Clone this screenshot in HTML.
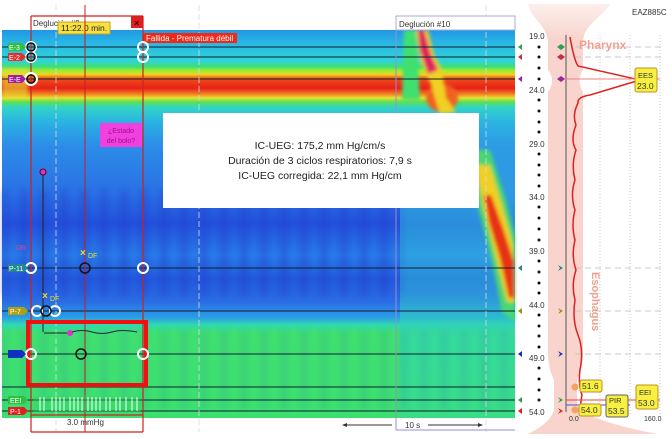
<!DOCTYPE html>
<html><head><meta charset="utf-8"><style>
html,body{margin:0;padding:0;background:#fff;width:672px;height:439px;overflow:hidden}
svg{display:block}
text{font-family:"Liberation Sans",sans-serif}
</style></head><body>
<svg width="672" height="439" viewBox="0 0 672 439" xmlns="http://www.w3.org/2000/svg">
<defs>
<linearGradient id="g" x1="0" y1="30" x2="0" y2="418" gradientUnits="userSpaceOnUse">
<stop offset="0" stop-color="#2296e6"/>
<stop offset="0.03" stop-color="#28b4e4"/>
<stop offset="0.08" stop-color="#30d4d8"/>
<stop offset="0.095" stop-color="#40e070"/>
<stop offset="0.105" stop-color="#a0ec30"/>
<stop offset="0.115" stop-color="#f0d020"/>
<stop offset="0.125" stop-color="#ee5018"/>
<stop offset="0.15" stop-color="#e82018"/>
<stop offset="0.165" stop-color="#f08020"/>
<stop offset="0.175" stop-color="#e8e030"/>
<stop offset="0.185" stop-color="#60e050"/>
<stop offset="0.2" stop-color="#30d4c8"/>
<stop offset="0.24" stop-color="#2ab0e4"/>
<stop offset="0.3" stop-color="#2c8ce8"/>
<stop offset="0.42" stop-color="#2a70e4"/>
<stop offset="0.5" stop-color="#2450dc"/>
<stop offset="0.58" stop-color="#2a7ce8"/>
<stop offset="0.64" stop-color="#2458dc"/>
<stop offset="0.7" stop-color="#2a6ce4"/>
<stop offset="0.74" stop-color="#2a9ce6"/>
<stop offset="0.76" stop-color="#30d8b0"/>
<stop offset="0.78" stop-color="#40e070"/>
<stop offset="1" stop-color="#3ce070"/>
</linearGradient>
<linearGradient id="gr" x1="0" y1="100" x2="0" y2="418" gradientUnits="userSpaceOnUse">
<stop offset="0" stop-color="#30c8d8" stop-opacity="0"/>
<stop offset="0.3" stop-color="#30b8e0" stop-opacity="0.6"/>
<stop offset="0.6" stop-color="#30c0d8" stop-opacity="0.5"/>
<stop offset="0.75" stop-color="#30d8b0" stop-opacity="0.7"/>
<stop offset="1" stop-color="#30d8b0" stop-opacity="0.3"/>
</linearGradient>
<linearGradient id="ph" x1="0" y1="0" x2="0" y2="40" gradientUnits="userSpaceOnUse">
<stop offset="0" stop-color="#f8d4cc" stop-opacity="0.3"/>
<stop offset="1" stop-color="#f8d4cc"/>
</linearGradient>
<filter id="b" x="-20%" y="-20%" width="140%" height="140%"><feGaussianBlur stdDeviation="3"/></filter>
<filter id="b2" x="-20%" y="-20%" width="140%" height="140%"><feGaussianBlur stdDeviation="1.8"/></filter>
<pattern id="vs" x="0" y="0" width="20" height="400" patternUnits="userSpaceOnUse">
<rect x="0" y="0" width="8" height="400" fill="#1838c8" opacity="0.35"/>
</pattern>
</defs>
<!-- heatmap -->
<rect x="2" y="30" width="513" height="388" fill="url(#g)"/>
<rect x="400" y="100" width="115" height="318" fill="url(#gr)"/>
<rect x="2" y="190" width="400" height="105" fill="url(#vs)" filter="url(#b)"/>
<rect x="2" y="330" width="513" height="80" fill="url(#vs)" opacity="0.25" filter="url(#b)"/>
<rect x="2" y="68" width="26" height="30" fill="#e8e030" opacity="0.6" filter="url(#b2)"/>
<!-- late swallow traces -->
<g filter="url(#b2)">
<path d="M404 30 L416 30 L420 100 L402 100 Z" fill="#40e070"/>
<ellipse cx="442" cy="98" rx="16" ry="14" fill="#f06020"/>
<path d="M416 30 L428 30 L434 55 L442 70 L446 98 L456 112 L440 114 L430 82 L420 60 Z" fill="#f0d020"/>
<path d="M418 30 L424 30 L431 55 L438 70 L428 74 L420 50 Z" fill="#e02060"/>
<path d="M466 150 L490 150 L506 200 L515 235 L515 322 L502 312 L492 262 L476 200 Z" fill="#50e060" opacity="0.85"/>
<path d="M476 165 L490 165 L502 205 L513 245 L515 302 L507 302 L496 258 L484 210 Z" fill="#f0d020"/>
<path d="M484 195 L491 195 L503 228 L514 262 L514 298 L509 298 L500 258 L489 222 Z" fill="#e83018"/>
</g>
<!-- horizontal channel lines -->
<g stroke="#102030" stroke-width="1">
<line x1="2" y1="47" x2="515" y2="47"/><line x1="2" y1="57" x2="515" y2="57"/>
<line x1="2" y1="79" x2="515" y2="79"/><line x1="2" y1="268" x2="515" y2="268"/>
<line x1="2" y1="311" x2="515" y2="311"/><line x1="2" y1="354" x2="515" y2="354"/>
<line x1="2" y1="387" x2="515" y2="387"/><line x1="2" y1="400" x2="515" y2="400"/>
<line x1="2" y1="411" x2="515" y2="411"/>
</g>
<!-- dashed verticals -->
<g stroke="#d8d8e8" stroke-width="1" stroke-dasharray="6 3" opacity="0.8">
<line x1="56" y1="5" x2="56" y2="432"/><line x1="199" y1="5" x2="199" y2="432"/><line x1="486" y1="5" x2="486" y2="432"/>
</g>
<!-- Deglucion #10 -->
<rect x="396" y="16" width="119" height="14" fill="#fff" stroke="#a8a8d8"/>
<text x="399" y="27" font-size="8" fill="#333">Deglución #10</text>
<line x1="396" y1="30" x2="396" y2="430" stroke="#9090d0"/>
<line x1="396" y1="430" x2="515" y2="430" stroke="#9090d0"/>
<!-- white info box -->
<rect x="163" y="113" width="316" height="95" fill="#fff"/>
<text x="320" y="149" font-size="10.5" fill="#222" text-anchor="middle">IC-UEG: 175,2 mm Hg/cm/s</text>
<text x="320" y="164" font-size="10.5" fill="#222" text-anchor="middle">Duración de 3 ciclos respiratorios: 7,9 s</text>
<text x="320" y="179" font-size="10.5" fill="#222" text-anchor="middle">IC-UEG corregida: 22,1 mm Hg/cm</text>
<!-- swallow box 9 -->
<rect x="31" y="16" width="112" height="14" fill="#fff"/>
<text x="33" y="26" font-size="8" fill="#333">Deglución #9</text>
<rect x="58" y="22" width="52" height="12" fill="#f8e040" stroke="#c8a020"/>
<text x="61" y="31" font-size="8.5" fill="#222">11:22.0 min.</text>
<rect x="131" y="16" width="12" height="12" fill="#e02020"/>
<text x="134" y="26" font-size="9" fill="#400" font-weight="bold">×</text>
<rect x="143" y="33" width="94" height="10" fill="#f02818"/>
<text x="146" y="41" font-size="8" fill="#fff">Fallida - Prematura débil</text>
<g stroke="#d02020" stroke-width="1.2" fill="none">
<line x1="31" y1="16" x2="31" y2="432"/><line x1="143" y1="16" x2="143" y2="432"/>
<line x1="31" y1="16" x2="143" y2="16"/><line x1="31" y1="432" x2="143" y2="432"/>
<line x1="31" y1="415" x2="143" y2="415"/>
</g>
<line x1="85" y1="5" x2="85" y2="432" stroke="#c02020" stroke-width="1"/>
<rect x="100" y="123" width="42" height="24" fill="#f040e0"/>
<text x="121" y="133" font-size="7" fill="#a0108a" text-anchor="middle">¿Estado</text>
<text x="121" y="143" font-size="7" fill="#a0108a" text-anchor="middle">del bolo?</text>
<line x1="43" y1="172" x2="43" y2="332" stroke="#222"/>
<circle cx="43" cy="172" r="3" fill="#e030d0" stroke="#600"/>
<!-- thick red box -->
<rect x="28" y="322" width="118" height="63" fill="none" stroke="#f01010" stroke-width="4"/>
<rect x="33" y="396" width="108" height="16" fill="#30d860" opacity="0.4"/>
<g stroke="#fff" stroke-width="1">
<path d="M40 397v14M44 397v14M52 397v14M56 397v14M60 397v14M64 397v14M70 397v14M74 397v14M78 397v14M82 397v14M88 397v14M92 397v14M96 397v14M100 397v14M106 397v14M110 397v14M116 397v14M120 397v14M126 397v14M132 397v14M137 397v14"/>
</g>
<text x="67" y="425" font-size="8" fill="#333">3.0 mmHg</text>
<path d="M44 333 L70 333" stroke="#222"/><circle cx="70" cy="333" r="3" fill="#e030d0"/>
<path d="M72 332 q10 -3 20 0 t20 0 t25 0" stroke="#224" fill="none"/>
<!-- markers -->
<g fill="none" stroke="#fff" stroke-width="2">
<circle cx="31" cy="47" r="5"/><circle cx="31" cy="57" r="5"/><circle cx="31" cy="79" r="6"/>
<circle cx="143" cy="47" r="5"/><circle cx="143" cy="57" r="5"/>
<circle cx="31" cy="268" r="5"/><circle cx="143" cy="268" r="5"/>
<circle cx="37" cy="311" r="5"/><circle cx="55" cy="311" r="5"/>
<circle cx="31" cy="354" r="5"/><circle cx="143" cy="354" r="5"/>
</g>
<g fill="none" stroke="#111" stroke-width="1.5">
<circle cx="31" cy="47" r="4"/><circle cx="31" cy="57" r="4"/><circle cx="31" cy="79" r="4"/>
<circle cx="85" cy="268" r="5"/><circle cx="46" cy="311" r="5"/><circle cx="81" cy="354" r="5"/>
</g>
<text x="80" y="256" font-size="10" fill="#f0e020" font-weight="bold">×</text><text x="88" y="258" font-size="7" fill="#f0e020">DF</text>
<text x="42" y="299" font-size="10" fill="#f0e020" font-weight="bold">×</text><text x="50" y="301" font-size="7" fill="#f0e020">DF</text>
<text x="16" y="250" font-size="7" fill="#e040a0">DR</text>
<!-- left tags -->
<g font-size="7" fill="#fff">
<path d="M8 43h14l4 4-4 4H8z" fill="#30c040"/><text x="9" y="50">E-3</text>
<path d="M8 53h14l4 4-4 4H8z" fill="#e03030"/><text x="9" y="60">E-2</text>
<path d="M8 75h14l4 4-4 4H8z" fill="#a020a0"/><text x="9" y="82">E-E</text>
<path d="M8 264h16l4 4-4 4H8z" fill="#208890"/><text x="9" y="271">P-11</text>
<path d="M8 307h16l4 4-4 4H8z" fill="#b0a010"/><text x="10" y="314">P-7</text>
<path d="M8 350h14l4 4-4 4H8z" fill="#1030c0"/>
<path d="M8 396h16l4 4-4 4H8z" fill="#30c040"/><text x="10" y="403">EEI</text>
<path d="M8 407h16l4 4-4 4H8z" fill="#e02020"/><text x="10" y="414">P-1</text>
</g>
<!-- 10 s arrow -->
<line x1="345" y1="425" x2="392" y2="425" stroke="#333"/><line x1="428" y1="425" x2="480" y2="425" stroke="#333"/>
<path d="M342 425l5-2v4z M483 425l-5-2v4z" fill="#333"/>
<text x="405" y="428" font-size="8" fill="#333">10 s</text>
<!-- right panel -->
<text x="632" y="15" font-size="8" fill="#333">EAZ885C</text>
<path d="M528 4 L610 4 C600 20 584 24 583 42 L583 70 Q576 80 583 92 L583 352 Q583 368 577 380 L577 405 Q585 420 657 434 L528 434 Q556 420 554 405 L554 380 Q548 368 548 352 L548 92 Q556 80 548 70 L548 42 C546 24 532 20 528 4 Z" fill="url(#ph)"/>
<g stroke="#c8c8c8" stroke-dasharray="6 4">
<line x1="575" y1="47" x2="662" y2="47"/><line x1="575" y1="57" x2="662" y2="57"/>
<line x1="575" y1="268" x2="662" y2="268"/><line x1="575" y1="311" x2="662" y2="311"/><line x1="575" y1="354" x2="662" y2="354"/>
</g>
<g stroke="#c8c8d8" stroke-dasharray="1 2"><line x1="600" y1="35" x2="600" y2="415"/><line x1="630" y1="35" x2="630" y2="415"/><line x1="660" y1="35" x2="660" y2="415"/></g>
<text x="579" y="49" font-size="12" fill="#f4a090" font-weight="bold">Pharynx</text>
<text x="592" y="272" font-size="11" fill="#f0a090" font-weight="bold" transform="rotate(90 592 272)">Esophagus</text>
<line x1="566" y1="35" x2="566" y2="412" stroke="#555"/>
<g fill="#111">
<circle cx="539" cy="47" r="1.5"/><circle cx="539" cy="57" r="1.5"/><circle cx="539" cy="68" r="1.5"/><circle cx="539" cy="79" r="1.5"/>
<circle cx="539" cy="100" r="1.5"/><circle cx="539" cy="111" r="1.5"/><circle cx="539" cy="122" r="1.5"/><circle cx="539" cy="132" r="1.5"/>
<circle cx="539" cy="154" r="1.5"/><circle cx="539" cy="165" r="1.5"/><circle cx="539" cy="175" r="1.5"/><circle cx="539" cy="186" r="1.5"/>
<circle cx="539" cy="207" r="1.5"/><circle cx="539" cy="218" r="1.5"/><circle cx="539" cy="229" r="1.5"/><circle cx="539" cy="240" r="1.5"/>
<circle cx="539" cy="261" r="1.5"/><circle cx="539" cy="272" r="1.5"/><circle cx="539" cy="283" r="1.5"/><circle cx="539" cy="293" r="1.5"/>
<circle cx="539" cy="315" r="1.5"/><circle cx="539" cy="326" r="1.5"/><circle cx="539" cy="336" r="1.5"/><circle cx="539" cy="347" r="1.5"/>
<circle cx="539" cy="368" r="1.5"/><circle cx="539" cy="379" r="1.5"/><circle cx="539" cy="390" r="1.5"/><circle cx="539" cy="400" r="1.5"/>
</g>
<g font-size="8" fill="#333">
<text x="529" y="39">19.0</text><text x="529" y="93">24.0</text><text x="529" y="147">29.0</text><text x="529" y="200">34.0</text>
<text x="529" y="254">39.0</text><text x="529" y="308">44.0</text><text x="529" y="361">49.0</text><text x="529" y="415">54.0</text>
<text x="569" y="421" font-size="7">0.0</text><text x="644" y="421" font-size="7">160.0</text>
</g>
<g>
<path d="M518 47l4-3v6z" fill="#30a050"/><path d="M518 57l4-3v6z" fill="#c03040"/><path d="M518 79l4-3v6z" fill="#a020a0"/>
<path d="M518 268l4-3v6z" fill="#208890"/><path d="M518 311l4-3v6z" fill="#a09010"/><path d="M518 354l4-3v6z" fill="#1030c0"/>
<path d="M518 400l4-3v6z" fill="#30a050"/><path d="M518 411l4-3v6z" fill="#e02020"/>
<path d="M557 47l4-3 4 3-4 3z" fill="#30a050"/><path d="M557 57l4-3 4 3-4 3z" fill="#c03040"/><path d="M557 79l4-3 4 3-4 3z" fill="#a020a0"/>
<path d="M558 265l5 3-5 3 2-3z" fill="#208890"/><path d="M558 308l5 3-5 3 2-3z" fill="#a09010"/><path d="M558 351l5 3-5 3 2-3z" fill="#1030c0"/>
<path d="M558 397l5 3-5 3 2-3z" fill="#30a050"/><path d="M558 408l5 3-5 3 2-3z" fill="#e02020"/>
</g>
<path d="M570 37 Q574 60 578 66 L640 80 L590 95 Q577 97 578 103 Q572 115 576 125 Q570 140 576 150 Q571 165 575 180 Q570 195 575 210 Q571 225 575 240 Q571 255 576 270 Q571 285 575 300 Q572 320 578 335 Q584 350 580 370 Q578 385 582 395 Q580 405 581 412" fill="none" stroke="#e02020" stroke-width="1.5"/>
<line x1="566" y1="79" x2="660" y2="79" stroke="#f08080"/>
<line x1="566" y1="400" x2="660" y2="400" stroke="#f04040"/>
<line x1="566" y1="405" x2="630" y2="405" stroke="#5050d0"/>
<circle cx="575" cy="387" r="3.5" fill="#f8a060"/><circle cx="575" cy="410" r="3.5" fill="#f8a060"/>
<g font-size="8.5" fill="#333">
<rect x="635" y="68" width="22" height="24" rx="2" fill="#f8f040" stroke="#c09020"/><text x="638" y="78" font-size="7.5">EES</text><text x="637" y="89">23.0</text>
<rect x="580" y="380" width="22" height="12" rx="2" fill="#f8f040" stroke="#c09020"/><text x="582" y="389">51.6</text>
<rect x="579" y="404" width="22" height="12" rx="2" fill="#f8f040" stroke="#c09020"/><text x="581" y="413">54.0</text>
<rect x="606" y="395" width="22" height="22" rx="2" fill="#f8f040" stroke="#606060"/><text x="609" y="403" font-size="7.5">PIR</text><text x="608" y="414">53.5</text>
<rect x="636" y="385" width="22" height="24" rx="2" fill="#f8f040" stroke="#c09020"/><text x="639" y="395" font-size="7.5">EEI</text><text x="638" y="406">53.0</text>
</g>
</svg>
</body></html>
